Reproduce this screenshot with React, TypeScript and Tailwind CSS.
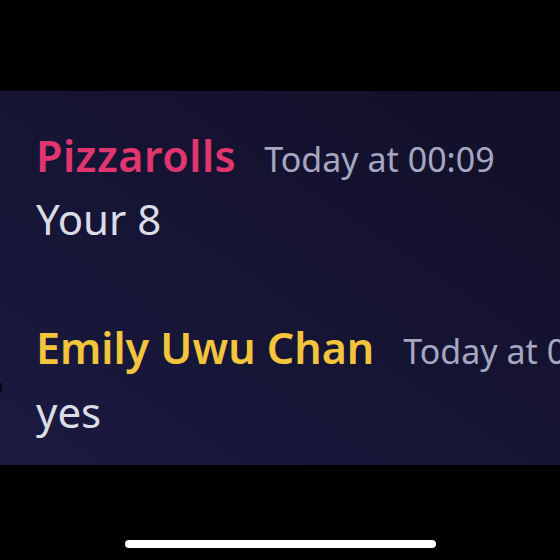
export default function App() {
  return (
    <div
      className="w-[560px] h-[560px] bg-black flex flex-col overflow-hidden"
      style={{ fontFamily: '"Noto Sans", "Open Sans", sans-serif' }}
    >
      <div className="h-[91px] shrink-0" />
      <div className="h-[374px] shrink-0 bg-gradient-to-tr from-[#1b1a40] via-[#161433] to-[#120f28] pl-[36px] pt-[35px] overflow-hidden relative">
        <div className="flex items-baseline gap-[28px] whitespace-nowrap h-[63px]">
          <span className="text-[#e1356f] text-[43px] font-semibold leading-[60px] tracking-[0.5px]">Pizzarolls</span>
          <span className="text-[#a6a7c2] text-[34px] leading-[60px]">Today at 00:09</span>
        </div>
        <div className="text-[#dcdce8] text-[42px] leading-[60px]">Your 8</div>
        <div className="flex items-baseline gap-[29px] whitespace-nowrap mt-[69px] h-[64px]">
          <span className="text-[#f2c53d] text-[43px] font-semibold leading-[60px]">Emily Uwu Chan</span>
          <span className="text-[#a6a7c2] text-[34px] leading-[60px] pr-[12px]">Today at 00:09</span>
        </div>
        <div className="text-[#dcdce8] text-[42px] leading-[60px]">yes</div>
        <div className="absolute left-0 top-[292px] w-[2px] h-[9px] bg-[#07071a]" />
      </div>
      <div className="flex-1 flex items-end justify-center pb-[12px]">
        <div className="w-[311px] h-[8px] rounded-full bg-white" />
      </div>
    </div>
  );
}
